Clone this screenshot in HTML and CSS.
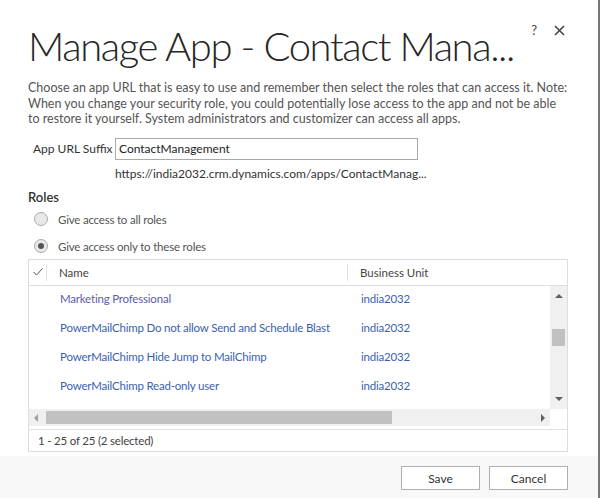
FILE: index.html
```html
<!DOCTYPE html>
<html lang="en">
<head>
    <meta charset="UTF-8">
    <title>Manage App</title>
    <link rel="stylesheet" href="styles.css">
</head>
<body>
    <div class="dialog">
        <div class="dialog-body">
            <!-- Title bar -->
            <div class="title-bar">
                <h1 class="title">Manage App - Contact Mana...</h1>
                <div class="title-tools">
                    <span class="help">?</span>
                    <svg class="close" width="11" height="11" viewBox="0 0 11 11">
                        <path d="M1 1 L10 10 M10 1 L1 10" stroke="#444" stroke-width="1.6" fill="none"/>
                    </svg>
                </div>
            </div>

            <p class="intro">Choose an app URL that is easy to use and remember then select the roles that can access it. Note: When you change your security role, you could potentially lose access to the app and not be able to restore it yourself. System administrators and customizer can access all apps.</p>

            <!-- URL suffix -->
            <div class="url-row">
                <label class="url-label" for="suffix">App URL Suffix</label>
                <input class="url-input" id="suffix" type="text" value="ContactManagement">
            </div>
            <div class="url-preview">https://india2032.crm.dynamics.com/apps/ContactManag...</div>

            <!-- Roles -->
            <h3 class="section-title">Roles</h3>
            <div class="radio-row">
                <span class="radio"></span>
                <span>Give access to all roles</span>
            </div>
            <div class="radio-row">
                <span class="radio checked"></span>
                <span>Give access only to these roles</span>
            </div>

            <div class="grid">
                <div class="grid-head">
                    <div class="col-check">
                        <svg width="10" height="8" viewBox="0 0 10 8">
                            <path d="M0.5 4 L3.5 7 L9.5 0.5" stroke="#555" stroke-width="1" fill="none"/>
                        </svg>
                    </div>
                    <div class="col-name">Name</div>
                    <div class="col-unit">Business Unit</div>
                </div>
                <div class="grid-main">
                    <div class="grid-rows">
                        <div class="grid-row">
                            <div class="col-check"></div>
                            <div class="col-name visited">Marketing Professional</div>
                            <div class="col-unit">india2032</div>
                        </div>
                        <div class="grid-row">
                            <div class="col-check"></div>
                            <div class="col-name">PowerMailChimp Do not allow Send and Schedule Blast</div>
                            <div class="col-unit">india2032</div>
                        </div>
                        <div class="grid-row">
                            <div class="col-check"></div>
                            <div class="col-name">PowerMailChimp Hide Jump to MailChimp</div>
                            <div class="col-unit">india2032</div>
                        </div>
                        <div class="grid-row">
                            <div class="col-check"></div>
                            <div class="col-name">PowerMailChimp Read-only user</div>
                            <div class="col-unit">india2032</div>
                        </div>
                    </div>
                    <div class="vscroll">
                        <span class="arrow arrow-up"></span>
                        <span class="vthumb"></span>
                        <span class="arrow arrow-down"></span>
                    </div>
                </div>
                <div class="hscroll-row">
                    <div class="hscroll">
                        <span class="arrow arrow-left"></span>
                        <span class="hthumb"></span>
                        <span class="arrow arrow-right"></span>
                    </div>
                    <div class="scroll-corner"></div>
                </div>
                <div class="grid-foot">1 - 25 of 25 (2 selected)</div>
            </div>
        </div>

        <!-- Footer buttons -->
        <div class="dialog-foot">
            <button class="btn">Save</button>
            <button class="btn">Cancel</button>
        </div>
    </div>
</body>
</html>
```

FILE: styles.css
```css
/* Global */
body {
    margin: 0;
    background: #ffffff;
    font-family: 'Segoe UI', 'Lato', sans-serif;
    font-size: 12px;
    color: #444;
}

.dialog {
    width: 600px;
    height: 498px;
    border-right: 2px solid #777;
    display: flex;
    flex-direction: column;
    box-sizing: border-box;
    overflow: hidden;
}

.dialog-body {
    flex: 1;
    padding: 0 30px 0 28px;
}

/* Title */
.title-bar {
    display: flex;
    justify-content: space-between;
    align-items: flex-start;
}

.title {
    margin: 21px 0 0 0;
    font-family: 'Lato', sans-serif;
    font-weight: 300;
    font-size: 40px;
    letter-spacing: -1.4px;
    line-height: 50px;
    color: #262626;
    white-space: nowrap;
}

.title-tools {
    display: flex;
    align-items: center;
    gap: 17px;
    margin-top: 22px;
    margin-right: 3px;
}

.help {
    font-size: 13px;
    color: #444;
}

/* Intro text */
.intro {
    margin: 9px 0 0 0;
    font-size: 12.5px;
    line-height: 15.5px;
    color: #555;
}

/* URL suffix */
.url-row {
    display: flex;
    align-items: center;
    margin-top: 11px;
    padding-left: 5px;
}

.url-label {
    color: #333;
    margin-right: 3px;
    width: 79px;
    white-space: nowrap;
}

.url-input {
    width: 303px;
    height: 22px;
    box-sizing: border-box;
    border: 1px solid #aaa;
    padding: 0 3px;
    font-family: inherit;
    font-size: 12px;
    color: #222;
    outline: none;
}

.url-preview {
    margin: 6px 0 0 87px;
    color: #333;
    line-height: 16px;
}

/* Roles */
.section-title {
    margin: 6px 0 0 0;
    font-size: 13px;
    font-weight: 600;
    color: #333;
    line-height: 18px;
}

.radio-row {
    display: flex;
    align-items: center;
    height: 27px;
    padding-left: 6px;
    font-size: 11.5px;
    letter-spacing: -0.2px;
    color: #555;
}

.radio {
    width: 12px;
    height: 12px;
    border: 1px solid #aaa;
    border-radius: 50%;
    background: #e8e8e8;
    margin-right: 10px;
    position: relative;
}

.radio.checked::after {
    content: '';
    position: absolute;
    left: 3px;
    top: 3px;
    width: 6px;
    height: 6px;
    border-radius: 50%;
    background: #555;
}

/* Grid */
.grid {
    border: 1px solid #ddd;
    margin-top: -1px;
    font-size: 11.5px;
}

.grid-head {
    display: flex;
    align-items: center;
    height: 25px;
    border-bottom: 1px solid #ddd;
    color: #444;
}

.col-check {
    width: 18px;
    padding-left: 4px;
    box-sizing: border-box;
    display: flex;
    align-items: center;
}

.col-name {
    width: 301px;
    padding-left: 12px;
    box-sizing: border-box;
    white-space: nowrap;
}

.col-unit {
    padding-left: 12px;
}

.grid-head .col-check {
    border-right: 1px solid #e0e0e0;
    height: 17px;
}

.grid-head .col-name {
    border-right: 1px solid #e0e0e0;
    height: 17px;
    line-height: 17px;
}

.grid-main {
    display: flex;
    height: 123px;
}

.grid-rows {
    flex: 1;
    overflow: hidden;
}

.grid-row {
    display: flex;
    height: 29px;
    align-items: center;
    letter-spacing: -0.2px;
    color: #3b5fb0;
}

.grid-row:first-child {
    margin-top: -2px;
}

.grid-row .col-name {
    margin-left: 1px;
}

.visited {
    color: #5d5ca8;
}

/* Scrollbars */
.vscroll {
    width: 17px;
    background: #f0f0f0;
    position: relative;
}

.vthumb {
    position: absolute;
    left: 2px;
    top: 43px;
    width: 13px;
    height: 17px;
    background: #c1c1c1;
}

.arrow {
    position: absolute;
    width: 0;
    height: 0;
    border: 4px solid transparent;
}

.arrow-up {
    left: 5px;
    top: 4px;
    border-bottom: 4px solid #606060;
}

.arrow-down {
    left: 5px;
    bottom: 4px;
    border-top: 4px solid #606060;
}

.hscroll-row {
    display: flex;
    height: 17px;
}

.hscroll {
    flex: 1;
    background: #f0f0f0;
    position: relative;
}

.hthumb {
    position: absolute;
    left: 17px;
    top: 2px;
    width: 346px;
    height: 13px;
    background: #c1c1c1;
}

.arrow-left {
    left: 1px;
    top: 5px;
    border-right: 4px solid #a0a0a0;
}

.arrow-right {
    right: 1px;
    top: 5px;
    border-left: 4px solid #606060;
}

.scroll-corner {
    width: 17px;
}

.grid-foot {
    margin-top: 3px;
    border-top: 1px solid #e0e0e0;
    height: 21px;
    line-height: 21px;
    padding-left: 9px;
    letter-spacing: -0.2px;
    color: #444;
}

/* Dialog footer */
.dialog-foot {
    flex: none;
    height: 42px;
    background: #f8f8f8;
    display: flex;
    justify-content: flex-end;
    align-items: flex-start;
    gap: 9px;
    padding: 10px 30px 0 0;
    box-sizing: border-box;
}

.btn {
    width: 79px;
    height: 24px;
    background: #fff;
    border: 1px solid #b0b0b0;
    font-family: inherit;
    font-size: 12px;
    color: #333;
    padding: 0;
}
```
